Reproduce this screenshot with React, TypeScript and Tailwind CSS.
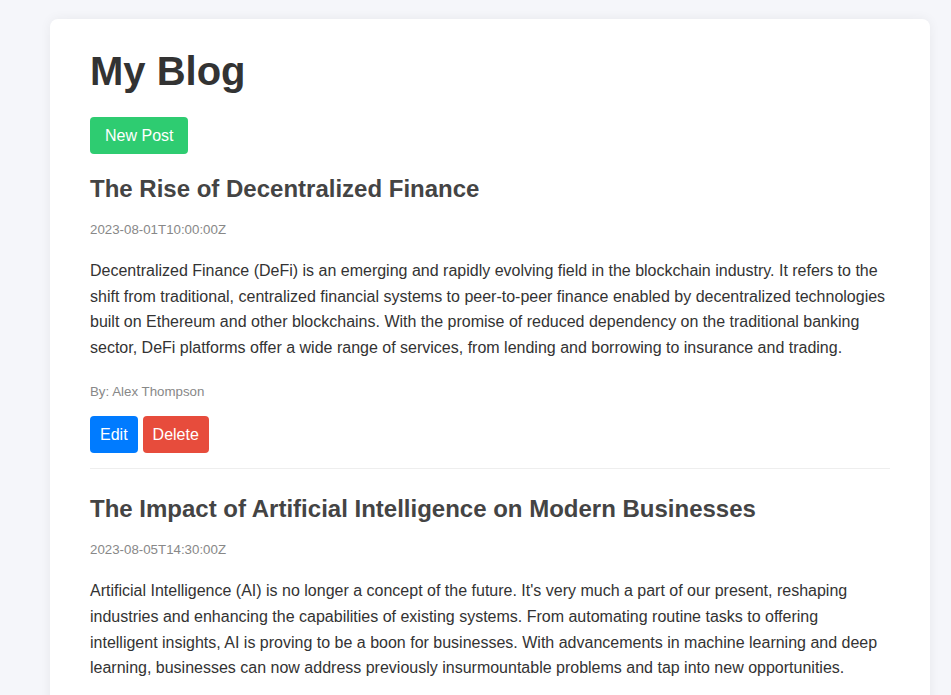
import React from "react";

type Post = {
  id: number;
  title: string;
  date: string;
  content: string;
  author: string;
};

const POSTS: Post[] = [
  {
    id: 1,
    title: "The Rise of Decentralized Finance",
    date: "2023-08-01T10:00:00Z",
    content:
      "Decentralized Finance (DeFi) is an emerging and rapidly evolving field in the blockchain industry. It refers to the shift from traditional, centralized financial systems to peer-to-peer finance enabled by decentralized technologies built on Ethereum and other blockchains. With the promise of reduced dependency on the traditional banking sector, DeFi platforms offer a wide range of services, from lending and borrowing to insurance and trading.",
    author: "Alex Thompson",
  },
  {
    id: 2,
    title: "The Impact of Artificial Intelligence on Modern Businesses",
    date: "2023-08-05T14:30:00Z",
    content:
      "Artificial Intelligence (AI) is no longer a concept of the future. It's very much a part of our present, reshaping industries and enhancing the capabilities of existing systems. From automating routine tasks to offering intelligent insights, AI is proving to be a boon for businesses. With advancements in machine learning and deep learning, businesses can now address previously insurmountable problems and tap into new opportunities.",
    author: "Sarah Mitchell",
  },
];

function PostItem({ post }: { post: Post }) {
  return (
    <div className="pb-[15px] border-b border-[#eeeeee]">
      <h2 className="text-[24px] leading-[28px] font-bold text-[#444444]">
        {post.title}
      </h2>
      <p className="mt-[19px] text-[13.3px] leading-[15px] text-[#888888]">
        {post.date}
      </p>
      <p className="mt-[21px] text-[16px] leading-[25.6px] text-[#333333]">
        {post.content}
      </p>
      <p className="mt-[24px] text-[13.3px] leading-[15px] text-[#888888]">
        By: {post.author}
      </p>
      <div className="mt-[17px] flex gap-[5px]">
        <button className="h-[37px] px-[10px] rounded-[4px] bg-[#007bff] text-white text-[16px]">
          Edit
        </button>
        <button className="h-[37px] px-[10px] rounded-[4px] bg-[#e74c3c] text-white text-[16px]">
          Delete
        </button>
      </div>
    </div>
  );
}

export default function App() {
  return (
    <div
      className="min-h-screen bg-[#f5f6fa] pl-[50px] pr-[21px] pt-[19px]"
      style={{ fontFamily: '"Liberation Sans", Arial, sans-serif' }}
    >
      <div className="bg-white rounded-[8px] shadow-[0_0_12px_rgba(0,0,0,0.06)] px-[40px] pt-[29px] pb-[40px]">
        <h1 className="text-[40px] leading-[46px] font-bold text-[#333333]">
          My Blog
        </h1>
        <button className="mt-[23px] h-[37px] px-[15px] rounded-[4px] bg-[#2ecc71] text-white text-[16px]">
          New Post
        </button>

        {/* Posts */}
        <div className="mt-[21px] flex flex-col gap-[26px]">
          {POSTS.map((post) => (
            <PostItem key={post.id} post={post} />
          ))}
        </div>
      </div>
    </div>
  );
}
